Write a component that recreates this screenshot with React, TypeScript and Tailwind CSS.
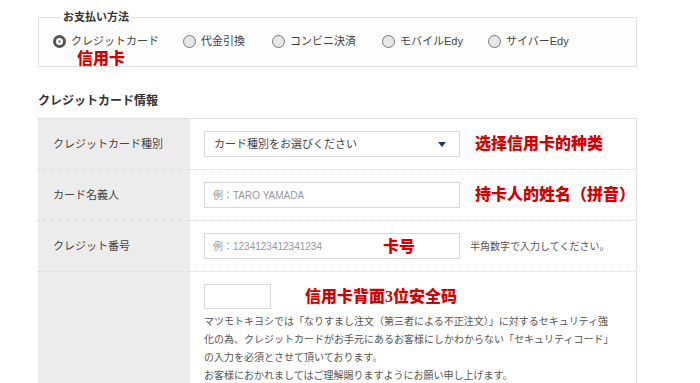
const jp = "font-['Liberation_Sans','Noto_Sans_CJK_JP',sans-serif]";
const red = "font-['Liberation_Serif','Noto_Sans_CJK_SC',serif] font-black text-[#d40000] text-[16px] leading-none";

function Radio({ label, checked = false }: { label: string; checked?: boolean }) {
  return (
    <label className="flex items-center gap-[5px]">
      {checked ? (
        <span className="w-[13px] h-[13px] rounded-full border-[3px] border-[#555] bg-white flex items-center justify-center">
          <span className="w-[3px] h-[3px] rounded-full bg-[#999]" />
        </span>
      ) : (
        <span className="w-[13px] h-[13px] rounded-full border border-[#777] bg-[#e6e6e6]" />
      )}
      <span className="text-[11px] text-[#444]">{label}</span>
    </label>
  );
}

function Row({ label, children, tall = false }: { label: string; children: React.ReactNode; tall?: boolean }) {
  return (
    <div className={`flex border-b border-dotted border-[#d4d4d4] ${tall ? "" : "h-[51px]"}`}>
      <div className="w-[152px] shrink-0 bg-[#ececec] flex items-center pl-[15px] text-[11px] text-[#444]">
        {tall ? "" : label}
      </div>
      <div className="flex-1 bg-white flex items-center pl-[14px]">{children}</div>
    </div>
  );
}

export default function App() {
  return (
    <div className={`w-[700px] h-[383px] overflow-hidden bg-white ${jp}`}>
      <div className="pl-[38px] w-[637px]">
        {/* payment method */}
        <div className="relative mt-[17px] h-[50px] border border-[#e0e0e0] bg-[#fdfdfd]">
          <div className="absolute left-[22px] -top-[8px] bg-white px-[2px] text-[11px] font-bold text-[#333] leading-[14px]">
            お支払い方法
          </div>
          <div className="flex items-center pl-[14px] pt-[15px]">
            <div className="w-[130px]"><Radio label="クレジットカード" checked /></div>
            <div className="w-[89px]"><Radio label="代金引換" /></div>
            <div className="w-[110px]"><Radio label="コンビニ決済" /></div>
            <div className="w-[106px]"><Radio label="モバイルEdy" /></div>
            <Radio label="サイバーEdy" />
          </div>
          <div className={`${red} pl-[38px] pt-[1px]`}>信用卡</div>
        </div>

        <div className="mt-[27px] text-[12px] font-bold text-[#333] leading-[14px]">クレジットカード情報</div>

        <div className="mt-[10px] border-t border-r border-[#e2e2e2]">
          <Row label="クレジットカード種別">
            <div className="w-[256px] h-[26px] border border-[#d8d8d8] bg-white flex items-center justify-between px-[9px] text-[11px] text-[#444]">
              <span>カード種別をお選びください</span>
              <span className="w-0 h-0 border-l-[4px] border-r-[4px] border-t-[5px] border-l-transparent border-r-transparent border-t-[#1f3a5f] mr-[4px]" />
            </div>
            <span className={`${red} ml-[15px]`}>选择信用卡的种类</span>
          </Row>
          <Row label="カード名義人">
            <div className="w-[256px] h-[26px] border border-[#d8d8d8] bg-white flex items-center px-[8px] text-[10px] text-[#999]">
              例：TARO YAMADA
            </div>
            <span className={`${red} ml-[15px]`}>持卡人的姓名（拼音）</span>
          </Row>
          <Row label="クレジット番号">
            <div className="relative w-[256px] h-[26px] border border-[#d8d8d8] bg-white flex items-center px-[8px] text-[10px] text-[#999]">
              例：1234123412341234
              <span className={`${red} absolute left-[178px] top-[5px]`}>卡号</span>
            </div>
            <span className="ml-[10px] text-[10px] text-[#555]">半角数字で入力してください。</span>
          </Row>
          <Row label="" tall>
            <div className="pt-[12px] pb-[6px]">
              <div className="flex items-center">
                <div className="w-[67px] h-[25px] border border-[#d8d8d8] bg-white" />
                <span className={`${red} ml-[34px]`}>信用卡背面3位安全码</span>
              </div>
              <div className="mt-[4px] whitespace-nowrap text-[10px] leading-[18px] text-[#555]">
                マツモトキヨシでは「なりすまし注文（第三者による不正注文）」に対するセキュリティ強
                <br />
                化の為、クレジットカードがお手元にあるお客様にしかわからない「セキュリティコード」
                <br />
                の入力を必須とさせて頂いております。
                <br />
                お客様におかれましてはご理解賜りますようにお願い申し上げます。
              </div>
            </div>
          </Row>
        </div>
      </div>
    </div>
  );
}
